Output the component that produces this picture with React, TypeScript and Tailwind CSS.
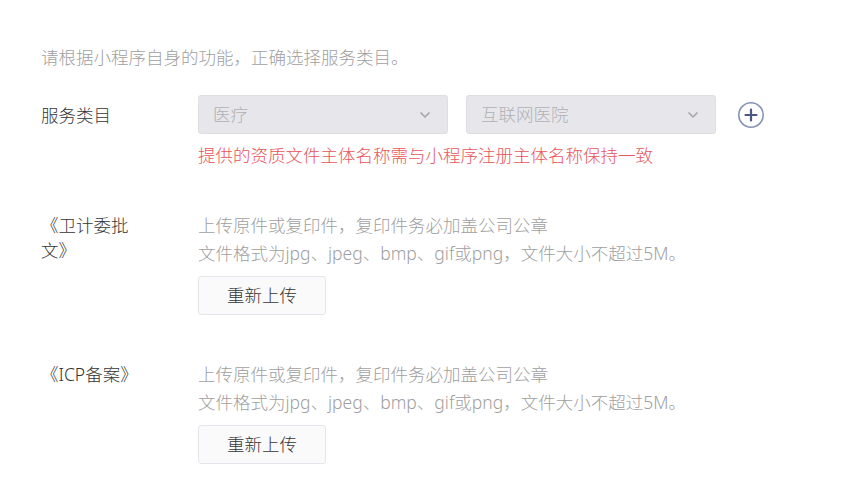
import { ChevronDown } from 'lucide-react';

const font = { fontFamily: '"Noto Sans", "Noto Sans CJK SC", sans-serif' };

function Select({ value }: { value: string }) {
	return (
		<div className="flex h-[39px] w-[250px] items-center justify-between rounded-[3px] border border-[#dedee3] bg-[#e7e7eb] pl-[14px] pr-[14px] text-[#b0b0b5]">
			<span>{value}</span>
			<ChevronDown className="h-[16px] w-[16px] text-[#a7a7ad]" strokeWidth={2.6} />
		</div>
	);
}

function PlusCircle() {
	return (
		<svg width="28" height="28" viewBox="0 0 28 28" className="ml-[21px]">
			<circle cx="14" cy="14" r="12.2" fill="none" stroke="#8693b4" strokeWidth="1.6" />
			<path d="M14 8.5v11M8.5 14h11" stroke="#4a5783" strokeWidth="2.2" strokeLinecap="round" />
		</svg>
	);
}

function UploadSection({ label }: { label: string }) {
	return (
		<div className="grid grid-cols-[157px_1fr]">
			<div className="w-[100px] leading-[25px] text-[#353535] pt-[2px]">{label}</div>
			<div>
				<p className="leading-[28px] text-[#a0a0a0]">上传原件或复印件，复印件务必加盖公司公章</p>
				<p className="leading-[28px] text-[#a0a0a0]">文件格式为jpg、jpeg、bmp、gif或png，文件大小不超过5M。</p>
				<button className="mt-[9px] flex h-[39px] w-[128px] items-center justify-center rounded-[3px] border border-[#e3e6ea] bg-[#fafafa] text-[#353535]">
					重新上传
				</button>
			</div>
		</div>
	);
}

export default function App() {
	return (
		<div className="min-h-[480px] w-[841px] bg-white pl-[41px] pt-[43px] text-[17.5px] font-light" style={font}>
			<p className="leading-[28px] text-[#a0a0a0]">请根据小程序自身的功能，正确选择服务类目。</p>

			<div className="mt-[24px] grid grid-cols-[157px_1fr]">
				<div className="flex h-[39px] items-center pt-[2px] text-[#353535]">服务类目</div>
				<div>
					<div className="flex items-center gap-[18px]">
						<Select value="医疗" />
						<div className="flex items-center">
							<Select value="互联网医院" />
							<PlusCircle />
						</div>
					</div>
					<p className="mt-[7px] leading-[28px] text-[#e8555b]">
						提供的资质文件主体名称需与小程序注册主体名称保持一致
					</p>
				</div>
			</div>

			<div className="mt-[42px] flex flex-col gap-[45px]">
				<UploadSection label="《卫计委批文》" />
				<UploadSection label="《ICP备案》" />
			</div>
		</div>
	);
}
